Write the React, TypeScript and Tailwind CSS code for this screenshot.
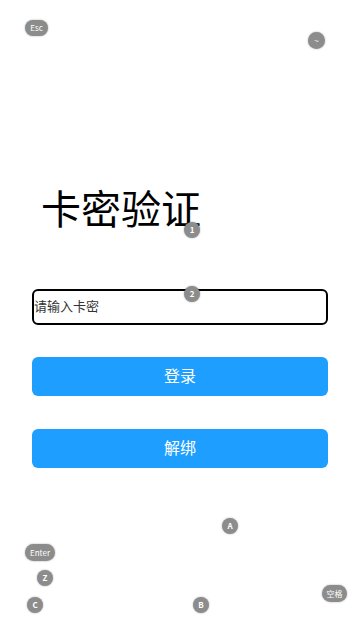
const font = { fontFamily: '"Noto Sans CJK SC", "Noto Sans", sans-serif' };

function Key({ label, className }: { label: string; className: string }) {
  return (
    <div
      className={`absolute flex items-center justify-center rounded-full bg-[#8c8c8c] text-[8px] leading-none text-white shadow-[0_0_2px_rgba(0,0,0,0.35)] ${className}`}
    >
      {label}
    </div>
  );
}

export default function App() {
  return (
    <div className="relative h-[640px] w-[360px] overflow-hidden bg-white" style={font}>
      <div className="flex flex-col px-[32px] pt-[187px]">
        <h1 className="pl-[9px] text-[40px] leading-[40px] font-normal text-black">卡密验证</h1>

        <input
          type="text"
          placeholder="请输入卡密"
          className="mt-[62px] h-[36px] w-full rounded-[6px] border-2 border-black bg-white px-0 pb-[4px] text-[13px] text-[#222] outline-none placeholder:text-[#333]"
        />

        <button className="mt-[32px] h-[39px] w-full rounded-[6px] bg-[#1e9fff] pb-[3px] text-[16px] text-white">
          登录
        </button>
        <button className="mt-[33px] h-[39px] w-full rounded-[6px] bg-[#1e9fff] pb-[3px] text-[16px] text-white">
          解绑
        </button>
      </div>

      {/* key hint overlays */}
      <Key label="Esc" className="left-[25px] top-[20px] h-[16px] w-[23px]" />
      <Key label="~" className="left-[308px] top-[32px] h-[17px] w-[17px]" />
      <Key label="1" className="left-[184px] top-[222px] h-[16px] w-[16px] font-bold" />
      <Key label="2" className="left-[184px] top-[286px] h-[16px] w-[16px] font-bold" />
      <Key label="A" className="left-[222px] top-[518px] h-[16px] w-[16px] font-bold" />
      <Key label="Enter" className="left-[25px] top-[544px] h-[17px] w-[30px]" />
      <Key label="Z" className="left-[37px] top-[570px] h-[16px] w-[16px] font-bold" />
      <Key label="C" className="left-[27px] top-[597px] h-[16px] w-[16px] font-bold" />
      <Key label="B" className="left-[193px] top-[597px] h-[16px] w-[16px] font-bold" />
      <Key label="空格" className="left-[322px] top-[585px] h-[17px] w-[25px]" />
    </div>
  );
}
